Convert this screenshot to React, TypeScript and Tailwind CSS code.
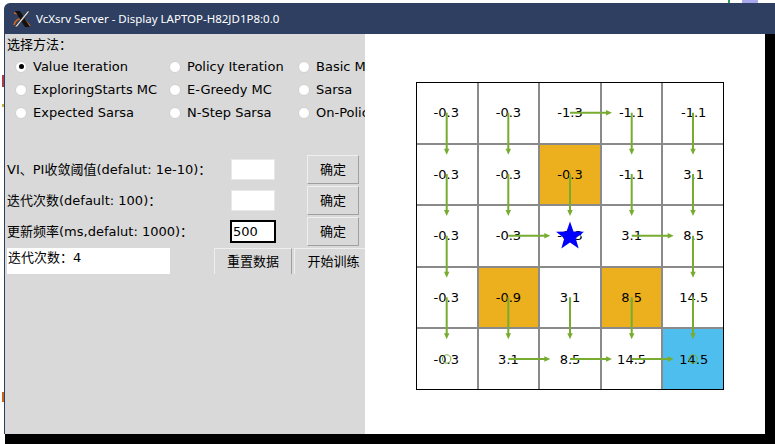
const CJK = '"DejaVu Sans","Noto Sans CJK SC",sans-serif';

const radios = [
  ["Value Iteration", "Policy Iteration", "Basic MC"],
  ["ExploringStarts MC", "E-Greedy MC", "Sarsa"],
  ["Expected Sarsa", "N-Step Sarsa", "On-Policy TD"],
];

const values = [
  ["-0.3", "-0.3", "-1.3", "-1.1", "-1.1"],
  ["-0.3", "-0.3", "-0.3", "-1.1", "3.1"],
  ["-0.3", "-0.3", "-0.3", "3.1", "8.5"],
  ["-0.3", "-0.9", "3.1", "8.5", "14.5"],
  ["-0.3", "3.1", "8.5", "14.5", "14.5"],
];

const fills: Record<string, string> = {
  "1-2": "bg-[#ecb01f]",
  "3-1": "bg-[#ecb01f]",
  "3-3": "bg-[#ecb01f]",
  "4-4": "bg-[#4dbeee]",
};

const dirs = ["DDRDD", "DDDDD", "DR-RD", "DDDDD", "ORRRO"];

function Radio({ label, checked }: { label: string; checked?: boolean }) {
  return (
    <div className="flex items-center gap-[6px] h-[23px] whitespace-nowrap">
      <span className="w-[12px] h-[12px] rounded-full bg-white border border-[#d0d0d0] flex items-center justify-center shrink-0">
        {checked && <span className="w-[5px] h-[5px] rounded-full bg-black" />}
      </span>
      <span>{label}</span>
    </div>
  );
}

function Confirm() {
  return (
    <button className="w-[52px] h-[29px] bg-[#d9d9d9] border border-[#a0a0a0] border-t-[#efefef] border-l-[#efefef] text-[13px] text-black">
      确定
    </button>
  );
}

function FormRow({ label, value }: { label: string; value?: string }) {
  return (
    <div className="flex items-center h-[29px] mb-[2px]">
      <span className="w-[225px] pl-[2px] whitespace-nowrap">{label}</span>
      <span className="w-[46px] flex justify-center">
        {value ? (
          <span className="w-[46px] h-[23px] bg-white border-2 border-black flex items-center pl-[1px]">{value}</span>
        ) : (
          <span className="w-[44px] h-[21px] bg-white border border-[#e8e8e8]" />
        )}
      </span>
      <span className="ml-[31px]"><Confirm /></span>
    </div>
  );
}

function Arrows() {
  const xs = [30.7, 92.3, 154, 215.7, 277];
  const ys = [30.7, 92, 153.7, 215.3, 277];
  const color = "#77ac30";
  const items: React.ReactNode[] = [];
  dirs.forEach((row, r) => {
    row.split("").forEach((d, c) => {
      const x = xs[c];
      const y = ys[r];
      if (d === "D") {
        items.push(
          <g key={`${r}-${c}`}>
            <line x1={x} y1={y} x2={x} y2={y + 37} stroke={color} strokeWidth={2} />
            <path d={`M${x - 2.7} ${y + 36}L${x + 2.7} ${y + 36}L${x} ${y + 42}Z`} fill={color} />
          </g>
        );
      } else if (d === "R") {
        items.push(
          <g key={`${r}-${c}`}>
            <line x1={x} y1={y} x2={x + 37} y2={y} stroke={color} strokeWidth={2} />
            <path d={`M${x + 36} ${y - 2.7}L${x + 36} ${y + 2.7}L${x + 42} ${y}Z`} fill={color} />
          </g>
        );
      } else if (d === "O") {
        items.push(<circle key={`${r}-${c}`} cx={x} cy={y} r={4.2} fill="none" stroke={color} strokeWidth={1} />);
      }
    });
  });
  return (
    <svg className="absolute left-0 top-0" width={308} height={308} viewBox="0 0 308 308">
      {items}
      <path
        d="M154 139.5L157.5 149.6L168 149.8L159.7 156.2L162.7 166.5L154 160.4L145.3 166.5L148.3 156.2L140 149.8L150.5 149.6Z"
        fill="#0000ff"
      />
    </svg>
  );
}

function Logo() {
  return (
    <svg width="18" height="18" viewBox="0 0 18 18" className="shrink-0">
      <path d="M1 3C7 3 13 11 17 16" fill="none" stroke="#d9641e" strokeWidth="1.5" />
      <path d="M1 15C2 11 5 8 9 9" fill="none" stroke="#d9641e" strokeWidth="1.5" />
      <path d="M2 1L7 1L17 17L12 17Z" fill="#111" />
      <path d="M14.5 1L17 1L4 17L1.5 17Z" fill="#dcdcdc" stroke="#222" strokeWidth="0.7" />
    </svg>
  );
}

export default function App() {
  return (
    <div className="relative w-[775px] h-[444px] bg-white overflow-hidden flex flex-col pt-[3px]">
      <span className="absolute left-[2px] top-[75px] w-[2px] h-[12px] bg-[#b03a48]" />
      <span className="absolute left-[2px] top-[104px] w-[2px] h-[3px] bg-[#c9b23a]" />
      <span className="absolute left-[2px] top-[392px] w-[2px] h-[10px] bg-[#c8651b]" />
      <span className="absolute left-[728px] top-0 w-[2px] h-[3px] bg-[#2e9e4f]" />
      <span className="absolute left-[742px] top-0 w-[16px] h-[3px] bg-[#a9a9ee]" />

      <div
        className="ml-[4px] h-[31px] shrink-0 rounded-tl-[6px] bg-[#2e3f62] flex items-center pl-[9px] gap-[5px] text-white text-[11.5px]"
        style={{ fontFamily: '"Noto Sans",sans-serif' }}
      >
        <Logo />
        <span>VcXsrv Server - Display LAPTOP-H82JD1P8:0.0</span>
      </div>

      <div className="ml-[4px] h-[400px] shrink-0 flex border-l border-[#2e3f62]">
        <div
          className="w-[360px] shrink-0 bg-[#d9d9d9] overflow-hidden text-[13px] leading-none text-black"
          style={{ fontFamily: CJK }}
        >
          <div className="pl-[2px] pt-[4px] h-[20px]">选择方法：</div>
          <div className="pl-[10px] pt-[1px] grid grid-cols-[154px_129px_100px]">
            {radios.flat().map((label, i) => (
              <Radio key={label} label={label} checked={i === 0} />
            ))}
          </div>
          <div className="mt-[31px]">
            <FormRow label="VI、PI收敛阈值(defalut: 1e-10)：" />
            <FormRow label="迭代次数(default: 100)：" />
            <FormRow label="更新频率(ms,defalut: 1000)：" value="500" />
          </div>
          <div className="flex h-[26px] pl-[2px]">
            <div className="w-[163px] shrink-0 h-full bg-white pl-[1px] pt-[3px]">迭代次数：4</div>
            <button className="ml-[44px] shrink-0 w-[78px] h-full bg-[#d9d9d9] border border-b-0 border-[#a0a0a0] border-t-[#efefef] border-l-[#efefef] text-[13px]">
              重置数据
            </button>
            <button className="ml-[2px] shrink-0 w-[78px] h-full bg-[#d9d9d9] border-l border-t border-[#efefef] text-[13px]">
              开始训练
            </button>
          </div>
        </div>

        <div className="w-[400px] shrink-0 bg-white pl-[51px] pt-[48px]">
          <div className="relative w-[308px] h-[308px]">
            <div className="grid grid-cols-5 grid-rows-5 w-full h-full">
              {values.map((row, r) =>
                row.map((v, c) => (
                  <div
                    key={`${r}-${c}`}
                    className={`flex items-center justify-center text-[13px] text-black border-[#8a8a8a] ${c < 4 ? "border-r" : ""} ${c > 0 ? "border-l" : ""} ${r < 4 ? "border-b" : ""} ${r > 0 ? "border-t" : ""} ${fills[`${r}-${c}`] ?? "bg-white"}`}
                    style={{ fontFamily: '"DejaVu Sans",sans-serif' }}
                  >
                    {v}
                  </div>
                ))
              )}
            </div>
            <div className="absolute inset-0 border-[1.5px] border-black" />
            <Arrows />
          </div>
        </div>

        <div className="flex-1 bg-black" />
      </div>

      <div className="ml-[5px] flex-1 bg-black" />
    </div>
  );
}
